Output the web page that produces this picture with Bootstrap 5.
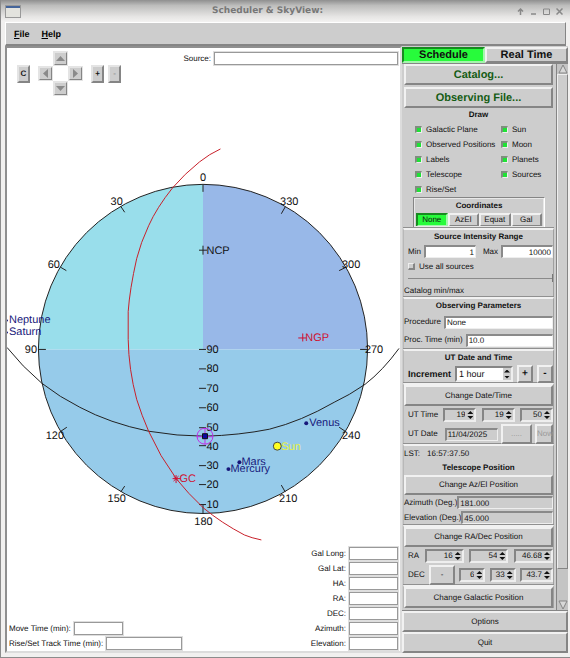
<!DOCTYPE html>
<html lang="en">
<head>
<meta charset="utf-8">
<meta name="viewport" content="width=device-width, initial-scale=1">
<title>Scheduler &amp; SkyView:</title>
<link href="https://cdn.jsdelivr.net/npm/bootstrap@5.3.0/dist/css/bootstrap.min.css" rel="stylesheet">
<style>
:root { --face: #cdcdcd; --lit: #f1f1f1; --shade: #858585; }
body { font: 8px/10px "Liberation Sans", Arial, sans-serif; text-rendering: geometricPrecision; color: #111; background: #f1f0ef; border-left: 1px solid #8c8c8c; border-bottom: 1px solid #8c8c8c; }
h1, h2, label, input, button { font-size: 8px; line-height: 10px; margin: 0; text-rendering: inherit; }
label { white-space: nowrap; }
h2 { font-weight: 700; text-align: center; height: 14px; line-height: 14px; }
button { color: #111; background: var(--face); border: 2px solid; border-color: var(--lit) var(--shade) var(--shade) var(--lit); padding: 0; border-radius: 0; white-space: nowrap; }
input { border-radius: 0; min-width: 0; color: #111; }

.titlebar { height: 22px; background: linear-gradient(#8f8f8f, #bdbdbc 25%, #e6e5e4 75%, #f3f2f1); color: #777; }
.titlebar h1 { font: 700 9px/20px "DejaVu Sans", sans-serif; }
.titlebar button { border: 0; background: none; width: 13px; height: 20px; line-height: 0; }
.menubar { height: 24px; margin-left: 4px; margin-right: 4px; background: var(--face); border: solid; border-width: 1px 1px 2px 1px; border-color: #fff var(--shade) var(--shade) #fff; }
.menubar a { font-size: 9px; font-weight: 700; color: #000; text-decoration: none; }
.menubar a::first-letter { text-decoration: underline; }
.workarea { margin: 0 2px 4px 4px; }

.skypane { background: #fff; border: 2px solid; border-color: #8f8f8f #dcdcdc #dcdcdc #8f8f8f; }
.field { height: 13px; background: #fff; border: 1px solid #999; outline: 1px solid #dedede; padding: 0; }
.field-sm { width: 49px; }
.field-lg { width: 76px; }
.field-xl { width: 184px; }
.line { height: 15px; }
.tight { gap: 3px; }
.toolrow { padding: 3px 2px 0 10px; }
.readouts { padding: 0 2px 0 2px; }
.pad { display: grid; grid-template: repeat(3, 15px) / repeat(3, 15px); }
.pad button { line-height: 0; outline: 1px solid #e4e4e4; outline-offset: -1px; }
.pad button:nth-child(1) { grid-area: 1 / 2; }
.pad button:nth-child(2) { grid-area: 2 / 1; }
.pad button:nth-child(3) { grid-area: 2 / 3; }
.pad button:nth-child(4) { grid-area: 3 / 2; }
.pad button, .zoomkey { border-color: #e4e4e4 var(--shade) var(--shade) #e4e4e4; }
.zoomkey { width: 13px; height: 18px; font-weight: 700; }
.faint { color: #999; }
.skyplot { min-height: 0; flex: 1 1 0; width: 100%; }
.skyplot text { font-size: 11px; }

.sidebar { width: 166px; flex: none; background: var(--face); padding-top: 1px; }
.tab-key { height: 16px; font-size: 11px; line-height: 12px; font-weight: 700; }
.tab-on { background: #27fb3b; border-color: #178a20 #a4f5ac #a4f5ac #178a20; }
.panel { border-top: 1px solid #858585; border-bottom: 1px solid #858585; }
.controls { min-width: 0; flex: 1 1 0; padding: 0 2px 0 1px; }
.launch { gap: 2px; padding: 0 1px; }
.wide { width: 100%; height: 20px; }
.wide-lg { height: 21px; }
.green { font-size: 11px; font-weight: 700; color: #145c14; }
.block { border: solid; border-color: var(--lit) #a0a0a0 transparent #b8b8b8; border-width: 2px 1px 0 1px; box-shadow: 0 -1px #909090; }
.row18 { height: 18px; }
.row20 { height: 20px; }
.tick { appearance: none; width: 7px; height: 7px; border: solid; border-width: 2px 1px 1px 2px; border-color: #7d8f7d #eee #eee #7d8f7d; background: #ddd; flex: none; }
.tick:checked { background: #1fe235; }
.tick-up { border-width: 1px 2px 2px 1px; border-color: #eee #858585 #858585 #eee; background: var(--face); }
.ticks { display: grid; grid-template-columns: 86px 1fr; padding-left: 12px; }
.coords { border: 1px solid; border-color: #858585 #fff #fff #858585; outline: 1px solid #e8e8e8; outline-offset: -2px; margin: 0 9px 0 10px; height: 31px; padding: 1px 2px; }
.coords button { height: 14px; line-height: 10px; }
.entry { height: 13px; border: solid; border-width: 2px 1px 1px 2px; border-color: #8a8a8a #eee #eee #8a8a8a; background: #fff; padding: 0 1px; }
.stretch { flex: 1 1 0; width: 0; }
.gray { background: var(--face); }
.spin { height: 14px; min-width: 0; border: 2px solid; border-color: #858585 #eee #eee #858585; background: var(--face); }
.spin input { flex: 1 1 0; width: 0; border: 0; padding: 0 1px 0 0; background: none; text-align: right; }
.spin-white { background: #fff; height: 16px; }
.spin-white input { text-align: left; font-size: 9px; padding-left: 2px; }
.steps { width: 8px; flex: none; background: var(--face); }
.steps button { flex: 1; border: 0; background: none; }
.steps button::before { content: ""; display: block; width: 6px; height: 3px; margin: 1px auto; background: #111; clip-path: polygon(50% 0, 100% 100%, 0 100%); }
.steps button + button::before { clip-path: polygon(0 0, 100% 0, 50% 100%); }
.small-key { flex: none; height: 18px; width: 16px; font-weight: 700; font-size: 10px; }
.now-key { flex: none; width: 18px; height: 20px; }
.slide { appearance: none; height: 8px; background: linear-gradient(#8a8a8a, #8a8a8a) 0 4px / 100% 1px no-repeat; }
.slide::-webkit-slider-thumb { appearance: none; width: 1px; height: 8px; background: #777; }
.incr { font-size: 9px; font-weight: 700; }
.size-s { width: 26px; flex: none; }
.size-m { width: 33px; flex: none; }
.size-l { width: 39px; flex: none; }
.size-key { width: 31px; flex: none; }
.scroller { width: 12px; flex: none; border-left: 1px solid #858585; background: #c4c4c4; }
.scroller button { border: 0; background: none; height: 10px; line-height: 0; }
.thumb { flex: 500 1 0; background: var(--face); border: 1px solid; border-color: #eee #858585 #858585 #eee; }
.trough { flex: 31 1 0; }
</style>
</head>
<body class="d-flex flex-column min-vh-100">
<header class="titlebar d-flex align-items-center px-1">
  <svg width="16" height="13" viewBox="0 0 16 13"><rect x=".5" y=".5" width="15" height="12" fill="#e3e3de" stroke="#999"/><path d="M1 1h14v2H1z" fill="#45659a"/></svg>
  <h1 class="flex-fill text-center">Scheduler &amp; SkyView:</h1>
  <button aria-label="Shade"><svg width="7" height="7" viewBox="0 0 7 7"><path d="M3.500 7V1M1 3.500 3.500 1 6 3.500" fill="none" stroke="#888" stroke-width="1.500"/></svg></button>
  <button aria-label="Minimize"><svg width="7" height="7" viewBox="0 0 7 7"><path d="M1 6h5" stroke="#888" stroke-width="1.500"/></svg></button>
  <button aria-label="Maximize"><svg width="7" height="7" viewBox="0 0 7 7"><path d="M.5 1h6v5.500h-6z" fill="none" stroke="#888"/></svg></button>
  <button aria-label="Close"><svg width="7" height="7" viewBox="0 0 7 7"><path d="m.5.5 6 6m0-6-6 6" stroke="#888" stroke-width="1.500"/></svg></button>
</header>
<nav class="menubar d-flex align-items-center ps-2">
  <a href="#" class="d-block me-2 pe-1">File</a><a href="#" class="d-block">Help</a>
</nav>

<div class="workarea d-flex flex-fill">
  <main class="skypane d-flex flex-column flex-fill">
    <div class="toolrow d-flex align-items-start">
      <div class="d-flex align-items-center">
        <button class="zoomkey me-2">C</button>
        <div class="pad">
          <button aria-label="Up"><svg width="9" height="9"><path d="m4.500 2 4.500 5H0z" fill="#8a8a8a"/></svg></button>
          <button aria-label="Left"><svg width="9" height="9"><path d="m2 4.500 5-4.500v9z" fill="#8a8a8a"/></svg></button>
          <button aria-label="Right"><svg width="9" height="9"><path d="M7 4.500 2 0v9z" fill="#8a8a8a"/></svg></button>
          <button aria-label="Down"><svg width="9" height="9"><path d="m4.500 7 4.500-5H0z" fill="#8a8a8a"/></svg></button>
        </div>
        <button class="zoomkey ms-2">+</button>
        <button class="zoomkey ms-1 faint">-</button>
      </div>
      <div class="d-flex align-items-center ms-auto line tight">
        <label for="source">Source:</label>
        <input id="source" class="field field-xl">
      </div>
    </div>

    <svg class="skyplot" viewBox="7 98 394 447" fill="#111" font-family="Liberation Sans, Arial, sans-serif">
      <defs><clipPath id="dome"><circle cx="203.500" cy="349.500" r="165"/></clipPath></defs>
      <g clip-path="url(#dome)">
        <path d="M30 180h173.500v170H30z" fill="#99deeb"/>
        <path d="M203.500 180H380v170H203.500z" fill="#98b8e8"/>
        <path d="M30 350h350v170H30z" fill="#96cbea"/>
      </g>
      <g fill="none" stroke="#222">
        <circle cx="203.500" cy="349.500" r="165"/>
        <path d="M7 348Q22 367 42 384 60 398 80 408 110 424 149 432 178 437 205 437 240 436 270 430 302 422 335 403 350 396 366 385 384 371 400 349"/>
        <path d="M203.500 185v7M121 206.500l4 6M60.500 267.500l6 3.500M38.500 350H46M61 432l6-4M121 493l4-6M203.500 514v-8M286 493l-4-7M346 432l-6-4M361 350h7M347 267.500l-7 3.500M286 207l-4 7"/>
        <path d="M199.500 350h7M199.500 369.500h7M199.500 389h7M199.500 408.500h7M199.500 428.500h7M199.500 446.500h7M199.500 466.500h7M199.500 485.500h7M199.500 505.500h7M199.500 250.500h8M203.500 246v9"/>
      </g>
      <path d="M221 149Q210 154 200 162 185 174 173 188 157 208 149 226 141 243 137 259 130 290 128.500 312V340Q129 370 137 400 142 416 149 432 160 457 177 480 188 494 204 509 222 524 245 536 252 539 262 541" fill="none" stroke="#c8202a"/>
      <g text-anchor="middle">
        <text x="203.500" y="181">0</text><text x="117" y="205">30</text><text x="54" y="268">60</text><text x="31" y="354">90</text>
        <text x="55" y="440">120</text><text x="117" y="503">150</text><text x="204" y="526">180</text><text x="289" y="503">210</text>
        <text x="352" y="440">240</text><text x="375" y="354">270</text><text x="352" y="268">300</text><text x="290" y="205">330</text>
      </g>
      <text x="207" y="354">90</text><text x="207" y="373">80</text><text x="207" y="393">70</text><text x="207" y="412">60</text><text x="207" y="432">50</text><text x="207" y="451">40</text><text x="207" y="470">30</text><text x="207" y="489">20</text><text x="207" y="509">10</text>
      <text x="207" y="254">NCP</text>
      <g fill="#d01030"><path d="M299 338.500h8M303.500 334v8M173 479.500h8M176.500 476v8M174 477l5 5M179 477l-5 5" stroke="#d01030"/><text x="306" y="342">NGP</text><text x="180" y="483">GC</text></g>
      <g fill="#17177a">
        <text x="9" y="324">Neptune</text><text x="9" y="336">Saturn</text><text x="310" y="427">Venus</text><text x="242" y="466">Mars</text><text x="231" y="473">Mercury</text>
        <circle cx="307" cy="424" r="2"/><circle cx="240" cy="463" r="2"/><circle cx="229" cy="470" r="2"/><circle cx="7" cy="321" r="1"/><circle cx="7" cy="333" r="1"/>
      </g>
      <circle cx="278" cy="447" r="4" fill="#ffff20" stroke="#444"/><text x="282" y="451" fill="#e6f03c">Sun</text>
      <path d="M205.500 429v16M197 437.500h16" stroke="#c030e8"/><circle cx="205.500" cy="437" r="8" fill="none" stroke="#c030e8"/>
      <path d="M203 434.500h5v5h-5z" fill="#0a0aa0" stroke="#111"/>
    </svg>

    <div class="readouts d-flex justify-content-between align-items-end">
      <div>
        <div class="line d-flex align-items-center tight"><label for="move">Move Time (min):</label><input id="move" class="field field-sm"></div>
        <div class="line d-flex align-items-center tight"><label for="track">Rise/Set Track Time (min):</label><input id="track" class="field field-lg"></div>
      </div>
      <div>
        <div class="line d-flex align-items-center justify-content-end tight"><label for="gl">Gal Long:</label><input id="gl" class="field field-sm"></div>
        <div class="line d-flex align-items-center justify-content-end tight"><label for="gb">Gal Lat:</label><input id="gb" class="field field-sm"></div>
        <div class="line d-flex align-items-center justify-content-end tight"><label for="ha">HA:</label><input id="ha" class="field field-sm"></div>
        <div class="line d-flex align-items-center justify-content-end tight"><label for="ra">RA:</label><input id="ra" class="field field-sm"></div>
        <div class="line d-flex align-items-center justify-content-end tight"><label for="dec">DEC:</label><input id="dec" class="field field-sm"></div>
        <div class="line d-flex align-items-center justify-content-end tight"><label for="az">Azimuth:</label><input id="az" class="field field-sm"></div>
        <div class="line d-flex align-items-center justify-content-end tight"><label for="el">Elevation:</label><input id="el" class="field field-sm"></div>
      </div>
    </div>
  </main>

  <aside class="sidebar d-flex flex-column">
    <div class="d-flex">
      <button class="tab-key tab-on w-50">Schedule</button><button class="tab-key w-50">Real Time</button>
    </div>
    <div class="panel d-flex flex-fill">
      <div class="controls">
        <div class="launch d-flex flex-column">
          <button class="wide wide-lg green">Catalog...</button>
          <button class="wide wide-lg green">Observing File...</button>
        </div>
        <h2>Draw</h2>
        <div class="ticks">
          <div class="line d-flex align-items-center gap-1"><input type="checkbox" class="tick" id="d1" checked><label for="d1">Galactic Plane</label></div>
          <div class="line d-flex align-items-center gap-1"><input type="checkbox" class="tick" id="d2" checked><label for="d2">Sun</label></div>
          <div class="line d-flex align-items-center gap-1"><input type="checkbox" class="tick" id="d3" checked><label for="d3">Observed Positions</label></div>
          <div class="line d-flex align-items-center gap-1"><input type="checkbox" class="tick" id="d4" checked><label for="d4">Moon</label></div>
          <div class="line d-flex align-items-center gap-1"><input type="checkbox" class="tick" id="d5" checked><label for="d5">Labels</label></div>
          <div class="line d-flex align-items-center gap-1"><input type="checkbox" class="tick" id="d6" checked><label for="d6">Planets</label></div>
          <div class="line d-flex align-items-center gap-1"><input type="checkbox" class="tick" id="d7" checked><label for="d7">Telescope</label></div>
          <div class="line d-flex align-items-center gap-1"><input type="checkbox" class="tick" id="d8" checked><label for="d8">Sources</label></div>
          <div class="line d-flex align-items-center gap-1"><input type="checkbox" class="tick" id="d9" checked><label for="d9">Rise/Set</label></div>
        </div>
        <div class="coords">
          <h2>Coordinates</h2>
          <div class="d-flex"><button class="w-25 tab-on">None</button><button class="w-25">AzEl</button><button class="w-25">Equat</button><button class="w-25">Gal</button></div>
        </div>

        <section class="block">
          <h2>Source Intensity Range</h2>
          <div class="line d-flex align-items-center tight ps-1"><label for="min">Min</label><input id="min" class="entry text-end stretch" value="1"><label for="max" class="ps-1">Max</label><input id="max" class="entry text-end stretch" value="10000"></div>
          <div class="line d-flex align-items-center gap-1 ps-1"><input type="checkbox" class="tick tick-up" id="all"><label for="all">Use all sources</label></div>
          <div class="ps-1"><input type="range" class="slide d-block w-100" aria-label="Intensity" value="100"></div>
          <div class="line pt-1">Catalog min/max</div>
        </section>

        <section class="block">
          <h2>Observing Parameters</h2>
          <div class="row18 d-flex align-items-center tight"><label for="proc">Procedure</label><input id="proc" class="entry stretch" value="None"></div>
          <div class="row18 d-flex align-items-center tight"><label for="ptime">Proc. Time (min)</label><input id="ptime" class="entry stretch" value="10.0"></div>
        </section>

        <section class="block">
          <h2>UT Date and Time</h2>
          <div class="row18 d-flex align-items-center ps-1 gap-1"><label for="inc" class="incr">Increment</label>
            <div class="spin spin-white d-flex flex-fill"><input id="inc" value="1 hour"><span class="steps d-flex flex-column"><button aria-label="Up"></button><button aria-label="Down"></button></span></div>
            <button class="small-key">+</button><button class="small-key">-</button></div>
        </section>

        <section class="block">
          <button class="wide wide-lg d-block">Change Date/Time</button>
          <div class="row18 d-flex align-items-center justify-content-between ps-1"><label for="uth">UT Time</label>
            <div class="spin size-m d-flex"><input id="uth" value="19"><span class="steps d-flex flex-column"><button aria-label="Up"></button><button aria-label="Down"></button></span></div>
            <div class="spin size-m d-flex"><input aria-label="Minutes" value="19"><span class="steps d-flex flex-column"><button aria-label="Up"></button><button aria-label="Down"></button></span></div>
            <div class="spin size-m d-flex"><input aria-label="Seconds" value="50"><span class="steps d-flex flex-column"><button aria-label="Up"></button><button aria-label="Down"></button></span></div></div>
          <div class="row20 d-flex align-items-center tight ps-1"><label for="utd" class="me-1">UT Date</label><input id="utd" class="entry gray stretch" value="11/04/2025"><button class="wide size-key faint">.....</button><button class="now-key faint">Now</button></div>
        </section>

        <section class="block">
          <div class="line d-flex align-items-center tight"><span>LST:</span><span class="ps-1">16:57:37.50</span></div>
          <h2>Telescope Position</h2>
          <button class="wide d-block">Change Az/El Position</button>
          <div class="line d-flex align-items-center"><label for="taz">Azimuth (Deg.)</label><input id="taz" class="entry gray stretch" value="181.000"></div>
          <div class="line d-flex align-items-center"><label for="tel">Elevation (Deg.)</label><input id="tel" class="entry gray stretch" value="45.000"></div>
        </section>

        <section class="block">
          <button class="wide d-block">Change RA/Dec Position</button>
          <div class="row18 d-flex align-items-center justify-content-between ps-1"><label for="rah">RA</label>
            <div class="spin size-l d-flex"><input id="rah" value="16"><span class="steps d-flex flex-column"><button aria-label="Up"></button><button aria-label="Down"></button></span></div>
            <div class="spin size-l d-flex"><input aria-label="RA minutes" value="54"><span class="steps d-flex flex-column"><button aria-label="Up"></button><button aria-label="Down"></button></span></div>
            <div class="spin size-l d-flex"><input aria-label="RA seconds" value="46.68"><span class="steps d-flex flex-column"><button aria-label="Up"></button><button aria-label="Down"></button></span></div></div>
          <div class="row20 d-flex align-items-center justify-content-between ps-1"><label for="decd">DEC</label><button class="wide size-s">-</button>
            <div class="spin size-s d-flex"><input id="decd" value="6"><span class="steps d-flex flex-column"><button aria-label="Up"></button><button aria-label="Down"></button></span></div>
            <div class="spin size-s d-flex"><input aria-label="DEC minutes" value="33"><span class="steps d-flex flex-column"><button aria-label="Up"></button><button aria-label="Down"></button></span></div>
            <div class="spin size-m d-flex"><input aria-label="DEC seconds" value="43.7"><span class="steps d-flex flex-column"><button aria-label="Up"></button><button aria-label="Down"></button></span></div></div>
        </section>

        <section class="block">
          <button class="wide wide-lg d-block">Change Galactic Position</button>
        </section>
      </div>
      <div class="scroller d-flex flex-column">
        <button aria-label="Scroll up"><svg width="10" height="10"><path d="M5 1 9 9H1z" fill="#d8d8d8" stroke="#858585"/></svg></button>
        <div class="thumb"></div><div class="trough"></div>
        <button aria-label="Scroll down"><svg width="10" height="10"><path d="M5 9 9 1H1z" fill="#d8d8d8" stroke="#858585"/></svg></button>
      </div>
    </div>
    <button class="wide wide-lg">Options</button>
    <button class="wide wide-lg">Quit</button>
  </aside>
</div>
<script src="https://cdn.jsdelivr.net/npm/bootstrap@5.3.0/dist/js/bootstrap.bundle.min.js"></script>
</body>
</html>
